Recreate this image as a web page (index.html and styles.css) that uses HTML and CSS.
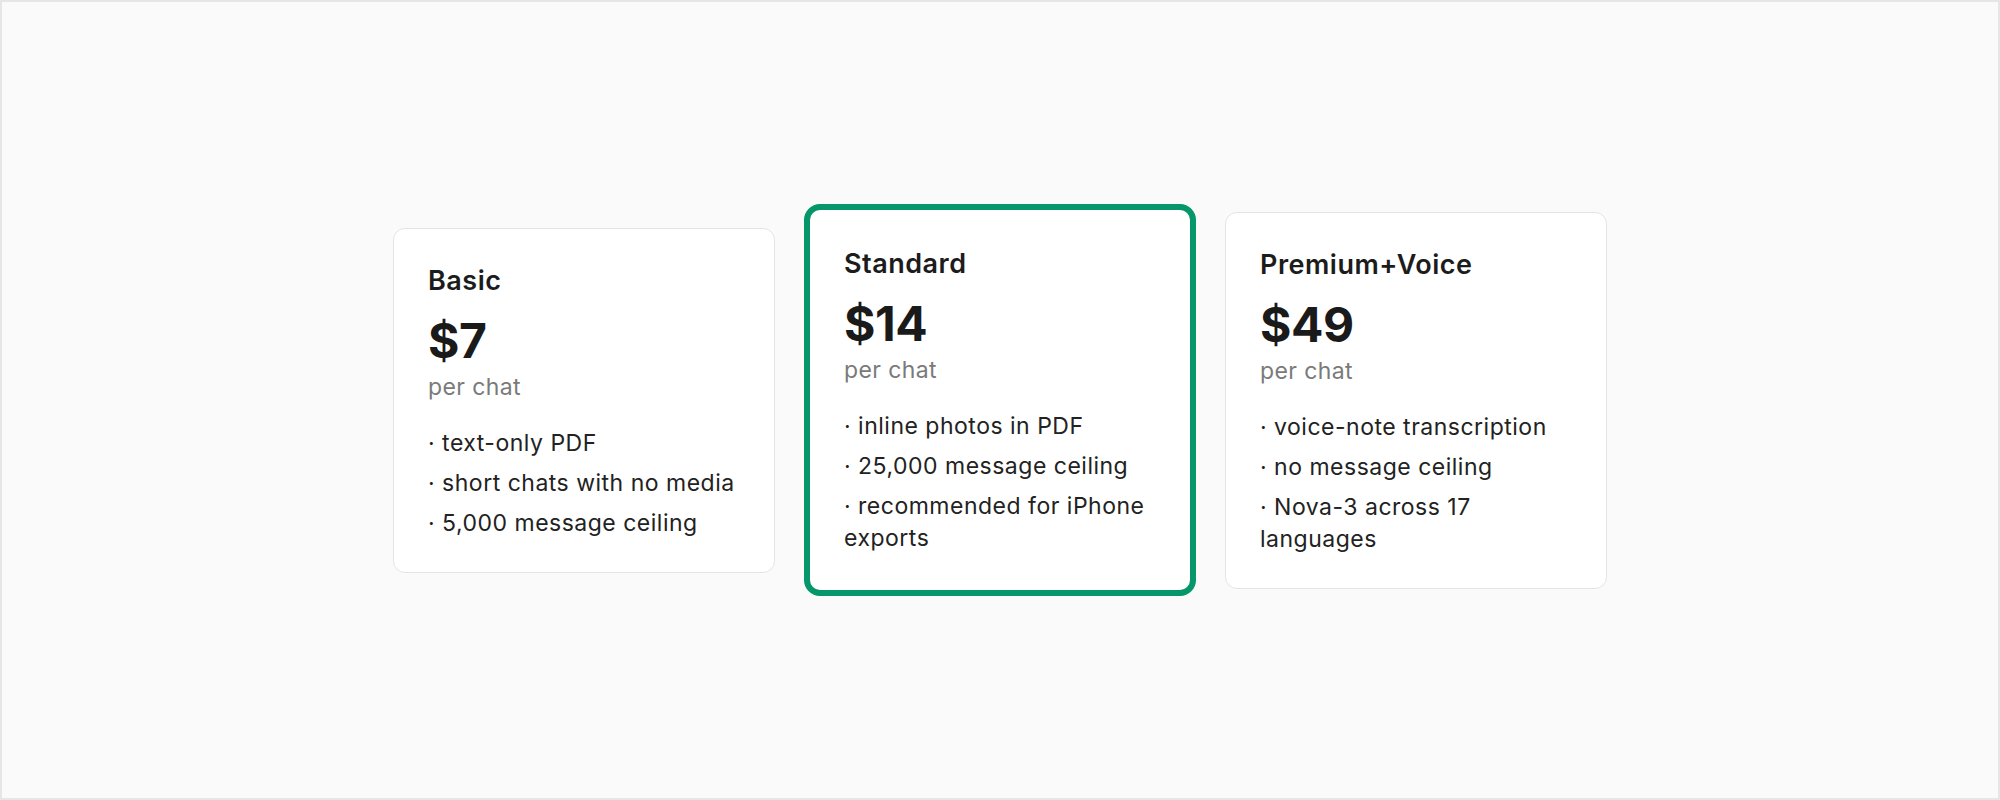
FILE: index.html
```html
<!DOCTYPE html>
<html lang="en">
<head>
<meta charset="utf-8">
<title>Pricing</title>
<link rel="stylesheet" href="styles.css">
</head>
<body>
<main class="frame">
  <section class="plans">
    <article class="card">
      <h2 class="name">Basic</h2>
      <div class="price">$7</div>
      <div class="unit">per chat</div>
      <ul class="features">
        <li>· text-only PDF</li>
        <li>· short chats with no media</li>
        <li>· 5,000 message ceiling</li>
      </ul>
    </article>
    <article class="card card-featured">
      <h2 class="name">Standard</h2>
      <div class="price">$14</div>
      <div class="unit">per chat</div>
      <ul class="features">
        <li>· inline photos in PDF</li>
        <li>· 25,000 message ceiling</li>
        <li>· recommended for iPhone exports</li>
      </ul>
    </article>
    <article class="card">
      <h2 class="name">Premium+Voice</h2>
      <div class="price">$49</div>
      <div class="unit">per chat</div>
      <ul class="features">
        <li>· voice-note transcription</li>
        <li>· no message ceiling</li>
        <li>· Nova-3 across 17 languages</li>
      </ul>
    </article>
  </section>
</main>
</body>
</html>
```

FILE: styles.css
```css
* { box-sizing: border-box; }

html, body {
  margin: 0;
  padding: 0;
}

body {
  font-family: Inter, "Noto Sans", "Liberation Sans", sans-serif;
  color: #1c1c1c;
  background: #fafafa;
}

.frame {
  width: 2000px;
  height: 800px;
  border: 2px solid #e6e6e6;
  background: #fafafa;
  display: flex;
  align-items: center;
  justify-content: center;
}

.plans {
  display: flex;
  align-items: center;
  gap: 29px;
}

.card {
  width: 382px;
  background: #ffffff;
  border: 1px solid #e4e4e4;
  border-radius: 12px;
  padding: 36px 34px 33px;
}

.card-featured {
  width: 392px;
  border: 6px solid #059669;
  border-radius: 16px;
  padding: 38px 34px 36px;
}

.name {
  margin: 0;
  font-size: 27px;
  line-height: 32px;
  font-weight: 600;
  letter-spacing: 0.5px;
  color: #1c1c1c;
}

.price {
  margin-top: 16px;
  font-size: 48px;
  line-height: 56px;
  font-weight: 700;
  color: #1a1a1a;
  letter-spacing: -0.5px;
}

.unit {
  margin-top: 4px;
  font-size: 23px;
  line-height: 28px;
  letter-spacing: 0.4px;
  color: #7a7a7a;
}

.features {
  list-style: none;
  margin: 26px 0 0;
  padding: 0;
  font-size: 23px;
  line-height: 32px;
  letter-spacing: 0.5px;
  color: #222222;
}

.features li + li {
  margin-top: 8px;
}
```
